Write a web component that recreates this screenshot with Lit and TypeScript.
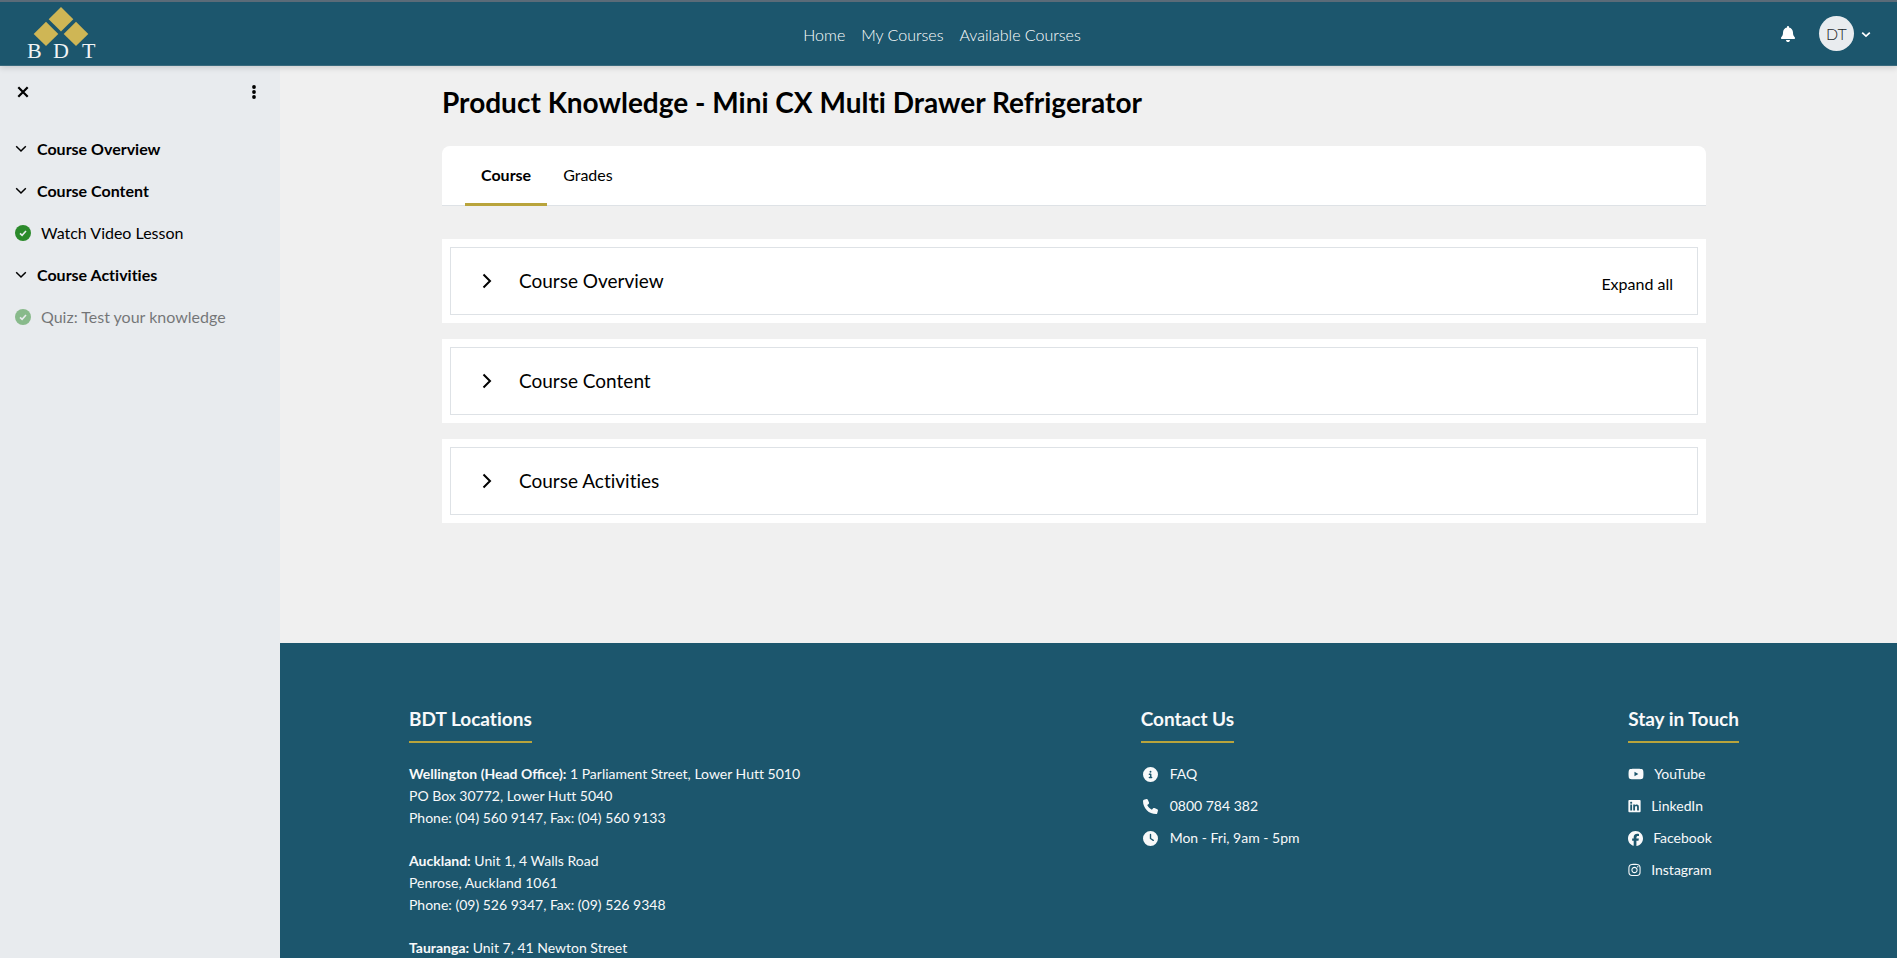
import { LitElement, html, css } from "lit";
import { customElement, property, state } from "lit/decorators.js";
import { classMap } from "lit/directives/class-map.js";

const icon = (name: string) => {
  switch (name) {
    case "bell":
      return html`<svg class="ic" width="14" height="16" viewBox="0 0 448 512" aria-hidden="true"><path fill="currentColor" d="M224 0c-17.700 0-32 14.300-32 32v19.200C119 66 64 130.600 64 208v18.800c0 47-17.300 92.400-48.500 127.600l-7.400 8.300c-8.400 9.400-10.400 22.900-5.300 34.400S19.400 416 32 416H416c12.600 0 24-7.400 29.200-18.900s3.100-25-5.300-34.400l-7.400-8.300C401.300 319.200 384 273.900 384 226.800V208c0-77.400-55-142-128-156.800V32c0-17.700-14.300-32-32-32zm45.300 493.300c12-12 18.700-28.300 18.700-45.300H160c0 17 6.700 33.300 18.700 45.300s28.300 18.700 45.300 18.700s33.300-6.700 45.300-18.700z"/></svg>`;
    case "info":
      return html`<svg class="ic" width="15" height="15" viewBox="0 0 512 512" aria-hidden="true"><path fill="currentColor" d="M256 512A256 256 0 1 0 256 0a256 256 0 1 0 0 512zM216 336h24V272H216c-13.300 0-24-10.700-24-24s10.700-24 24-24h48c13.300 0 24 10.700 24 24v88h8c13.300 0 24 10.700 24 24s-10.700 24-24 24H216c-13.300 0-24-10.700-24-24s10.700-24 24-24zm40-208a32 32 0 1 1 0 64 32 32 0 1 1 0-64z"/></svg>`;
    case "phone":
      return html`<svg class="ic" width="15" height="15" viewBox="0 0 512 512" aria-hidden="true"><path fill="currentColor" d="M164.900 24.600c-7.700-18.600-28-28.500-47.400-23.200l-88 24C12.100 30.200 0 46 0 64C0 311.400 200.600 512 448 512c18 0 33.800-12.100 38.600-29.500l24-88c5.300-19.400-4.600-39.700-23.200-47.400l-96-40c-16.300-6.800-35.200-2.100-46.300 11.600L304.700 368C234.300 334.700 177.300 277.700 144 207.300L193.300 167c13.700-11.200 18.400-30 11.600-46.300l-40-96z"/></svg>`;
    case "clock":
      return html`<svg class="ic" width="15" height="15" viewBox="0 0 512 512" aria-hidden="true"><path fill="currentColor" d="M256 0a256 256 0 1 1 0 512A256 256 0 1 1 256 0zM232 120V256c0 8 4 15.500 10.700 20l96 64c11 7.400 25.900 4.400 33.300-6.700s4.400-25.900-6.700-33.300L280 243.200V120c0-13.300-10.700-24-24-24s-24 10.700-24 24z"/></svg>`;
    case "youtube":
      return html`<svg class="ic" width="16" height="14" viewBox="0 0 576 512" aria-hidden="true"><path fill="currentColor" d="M549.700 124.100c-6.300-23.700-24.800-42.300-48.300-48.600C458.800 64 288 64 288 64S117.200 64 74.600 75.500c-23.500 6.300-42 24.900-48.300 48.600-11.400 42.900-11.400 132.300-11.400 132.300s0 89.400 11.400 132.300c6.300 23.700 24.800 41.500 48.300 47.800C117.200 448 288 448 288 448s170.800 0 213.400-11.500c23.500-6.300 42-24.200 48.300-47.800 11.400-42.900 11.400-132.300 11.400-132.300s0-89.400-11.400-132.300zm-317.500 213.500V175.200l142.700 81.200-142.700 81.200z"/></svg>`;
    case "linkedin":
      return html`<svg class="ic" width="13" height="14" viewBox="0 0 448 512" aria-hidden="true"><path fill="currentColor" d="M416 32H31.900C14.300 32 0 46.500 0 64.300v383.400C0 465.500 14.300 480 31.900 480H416c17.600 0 32-14.500 32-32.300V64.300c0-17.800-14.400-32.300-32-32.300zM135.400 416H69V202.200h66.500V416zm-33.200-243c-21.300 0-38.500-17.300-38.500-38.500S80.900 96 102.200 96c21.200 0 38.500 17.300 38.500 38.500 0 21.300-17.200 38.500-38.500 38.500zm282.100 243h-66.400V312c0-24.800-.5-56.700-34.500-56.700-34.600 0-39.900 27-39.900 54.900V416h-66.400V202.200h63.700v29.200h.9c8.900-16.800 30.600-34.500 62.900-34.500 67.200 0 79.700 44.300 79.700 101.900V416z"/></svg>`;
    case "facebook":
      return html`<svg class="ic" width="15" height="15" viewBox="0 0 512 512" aria-hidden="true"><path fill="currentColor" d="M512 256C512 114.600 397.400 0 256 0S0 114.600 0 256C0 376 82.700 476.800 194.200 504.500V334.200H141.400V256h52.800V222.300c0-87.100 39.400-127.500 125-127.500c16.200 0 44.200 3.200 55.700 6.400V172c-6-.6-16.500-1-29.600-1c-42 0-58.200 15.900-58.200 57.200V256h83.600l-14.400 78.200H287V510.100C413.800 494.800 512 386.900 512 256z"/></svg>`;
    case "instagram":
      return html`<svg class="ic" width="13" height="14" viewBox="0 0 448 512" aria-hidden="true"><path fill="currentColor" d="M224.100 141c-63.600 0-114.900 51.300-114.900 114.900s51.300 114.900 114.900 114.900S339 319.500 339 255.900 287.700 141 224.100 141zm0 189.600c-41.100 0-74.700-33.500-74.700-74.700s33.500-74.700 74.700-74.700 74.700 33.500 74.700 74.700-33.600 74.700-74.700 74.700zm146.400-194.300c0 14.900-12 26.800-26.800 26.800-14.900 0-26.800-12-26.800-26.800s12-26.800 26.800-26.800 26.800 12 26.800 26.800zm76.100 27.200c-1.700-35.900-9.900-67.700-36.200-93.900-26.200-26.200-58-34.400-93.900-36.200-37-2.100-147.900-2.100-184.900 0-35.800 1.700-67.600 9.900-93.900 36.100s-34.400 58-36.200 93.900c-2.100 37-2.100 147.900 0 184.900 1.700 35.900 9.900 67.700 36.200 93.900s58 34.400 93.900 36.200c37 2.100 147.900 2.100 184.900 0 35.900-1.700 67.700-9.900 93.900-36.200 26.200-26.200 34.400-58 36.200-93.900 2.100-37 2.100-147.800 0-184.800zM398.800 388c-7.800 19.600-22.900 34.700-42.600 42.600-29.500 11.700-99.500 9-132.100 9s-102.700 2.600-132.100-9c-19.600-7.800-34.700-22.900-42.600-42.600-11.700-29.500-9-99.500-9-132.100s-2.600-102.700 9-132.100c7.800-19.600 22.900-34.700 42.600-42.600 29.500-11.700 99.500-9 132.100-9s102.700-2.600 132.100 9c19.600 7.800 34.700 22.900 42.600 42.600 11.700 29.500 9 99.500 9 132.100s2.700 102.700-9 132.100z"/></svg>`;
    case "check":
      return html`<svg class="ic" width="16" height="16" viewBox="0 0 16 16" aria-hidden="true"><circle cx="8" cy="8" r="8" fill="#2b8a2b"/><path d="M5 8.300l2.100 2L11 6" fill="none" stroke="#e8ecef" stroke-width="1.600"/></svg>`;
    case "down":
      return html`<svg class="ic" width="12" height="12" viewBox="0 0 12 12" aria-hidden="true"><path d="M1.200 3.200L6 8l4.800-4.800" fill="none" stroke="currentColor" stroke-width="1.500"/></svg>`;
    case "caret":
      return html`<svg class="ic" width="10" height="10" viewBox="0 0 10 10" aria-hidden="true"><path d="M1.200 3.600L5 7.200l3.800-3.600" fill="none" stroke="currentColor" stroke-width="1.700"/></svg>`;
    case "right":
      return html`<svg class="ic" width="10" height="16" viewBox="0 0 10 16" aria-hidden="true"><path d="M1.500 1.500L8 8l-6.500 6.500" fill="none" stroke="currentColor" stroke-width="2"/></svg>`;
    case "close":
      return html`<svg class="ic" width="12" height="12" viewBox="0 0 12 12" aria-hidden="true"><path d="M1.300 1.300l9.400 9.400M10.700 1.300l-9.400 9.400" stroke="currentColor" stroke-width="2.200"/></svg>`;
    default:
      return html`<svg class="ic" width="4" height="14" viewBox="0 0 4 14" aria-hidden="true"><g fill="currentColor"><circle cx="2" cy="2" r="1.900"/><circle cx="2" cy="7" r="1.900"/><circle cx="2" cy="12" r="1.900"/></g></svg>`;
  }
};

const base = css`
  :host, * { box-sizing: border-box; }
  h1, h2, h3, p, ul, button { margin: 0; padding: 0; }
  a { color: inherit; text-decoration: none; }
  ul { list-style: none; }
  button { font: inherit; color: inherit; background: none; border: 0; cursor: pointer; }
  .ic { display: block; flex: none; }
`;

@customElement("site-header")
export class SiteHeader extends LitElement {
  static styles = [base, css`
    :host {
      display: grid;
      grid-template-columns: 1fr auto 1fr;
      align-items: center;
      height: 66px;
      padding: 0 26px 0 13px;
      background: #1c566d;
      border-top: 2px solid #5b6b78;
      border-bottom: 1px solid #396a7d;
      box-shadow: 0 2px 6px rgba(0, 0, 0, 0.14);
      color: #fff;
      position: relative;
      z-index: 1;
    }
    .logo { justify-self: start; margin-left: 13px; }
    .logo svg { display: block; }
    .nav { display: flex; gap: 16px; padding-top: 2px; font-weight: 300; }
    .tools { justify-self: end; display: flex; align-items: center; }
    .bell { padding: 5px; margin-right: 19px; }
    .user { display: flex; align-items: center; gap: 7px; }
    .avatar {
      display: grid; place-items: center;
      width: 35px; height: 35px; border-radius: 50%;
      background: #e9ecef; color: #212529; font-weight: 300;
    }
  `];
  render() {
    return html`
      <a class="logo" href="#" aria-label="BDT home">
        <svg width="72" height="56" viewBox="0 0 72 56">
          <g fill="#cfb655">
            <path d="M35 1l12.300 12.200L35 25.400 22.700 13.200z"/>
            <path d="M20 15.800l12.300 12.100L20 40 7.700 27.900z"/>
            <path d="M50 15.800l12.300 12.100L50 40 37.700 27.900z"/>
          </g>
          <g fill="#f1f4f5" font-family="Liberation Serif, serif" font-size="22">
            <text x="1" y="52">B</text><text x="27" y="52">D</text><text x="56" y="52">T</text>
          </g>
        </svg>
      </a>
      <nav class="nav">
        <a href="#">Home</a><a href="#">My Courses</a><a href="#">Available Courses</a>
      </nav>
      <div class="tools">
        <button class="bell" aria-label="Notifications">${icon("bell")}</button>
        <button class="user" aria-label="User menu"><span class="avatar">DT</span>${icon("caret")}</button>
      </div>`;
  }
}

@customElement("course-index")
export class CourseIndex extends LitElement {
  static styles = [base, css`
    :host { display: block; background: #e8ebee; padding: 12px 18px 0 15px; }
    .bar { display: flex; justify-content: space-between; margin-bottom: 22px; }
    .tool { display: grid; place-items: center; width: 16px; height: 28px; }
    .row { display: flex; align-items: center; height: 42px; width: 100%; gap: 10px; text-align: left; }
    .section { font-weight: 700; }
    .locked { opacity: 0.5; }
  `];
  render() {
    return html`
      <div class="bar">
        <button class="tool" aria-label="Close course index">${icon("close")}</button>
        <button class="tool" aria-label="Course index options">${icon("dots")}</button>
      </div>
      <nav>
        <button class="row section">${icon("down")}Course Overview</button>
        <button class="row section">${icon("down")}Course Content</button>
        <a class="row" href="#">${icon("check")}Watch Video Lesson</a>
        <button class="row section">${icon("down")}Course Activities</button>
        <a class="row locked" href="#">${icon("check")}Quiz: Test your knowledge</a>
      </nav>`;
  }
}

@customElement("course-section")
export class CourseSection extends LitElement {
  @property() heading = "";
  @property({ type: Boolean }) expander = false;
  static styles = [base, css`
    :host { display: block; background: #fff; padding: 8px; }
    .inner {
      display: flex; align-items: center; justify-content: space-between;
      height: 68px; padding: 0 24px 0 31px; border: 1px solid #dee2e6;
    }
    .toggle { display: flex; align-items: center; gap: 27px; }
    .name { font-size: 19px; font-weight: 400; line-height: 24px; }
    .all { padding-top: 6px; }
  `];
  render() {
    return html`<div class="inner">
      <button class="toggle" aria-expanded="false">${icon("right")}<h3 class="name">${this.heading}</h3></button>
      ${this.expander ? html`<button class="all">Expand all</button>` : ""}
    </div>`;
  }
}

@customElement("site-footer")
export class SiteFooter extends LitElement {
  static styles = [base, css`
    :host {
      display: flex; justify-content: space-between;
      background: #1c566d; color: #f8f9fa;
      padding: 64px 158px 64px 129px;
      font-size: 14px; line-height: 22px;
    }
    .title {
      width: fit-content; font-size: 19px; line-height: 24px; font-weight: 700;
      padding-bottom: 10px; border-bottom: 2px solid #b9a43c; margin-bottom: 20px;
    }
    .places { min-width: 403px; }
    .place { margin-bottom: 21px; }
    .place b { font-variant-ligatures: normal; }
    .list { display: flex; flex-direction: column; gap: 10px; }
    .item { display: flex; align-items: center; gap: 10px; }
    .contact .item { gap: 12px; padding-left: 2px; }
  `];
  render() {
    const item = (i: string, t: string) => html`<li><a class="item" href="#">${icon(i)}${t}</a></li>`;
    return html`
      <section class="places">
        <h2 class="title">BDT Locations</h2>
        <p class="place"><b>Wellington (Head Office):</b> 1 Parliament Street, Lower Hutt 5010<br>PO Box 30772, Lower Hutt 5040<br>Phone: (04) 560 9147, Fax: (04) 560 9133</p>
        <p class="place"><b>Auckland:</b> Unit 1, 4 Walls Road<br>Penrose, Auckland 1061<br>Phone: (09) 526 9347, Fax: (09) 526 9348</p>
        <p class="place"><b>Tauranga:</b> Unit 7, 41 Newton Street</p>
      </section>
      <section class="contact">
        <h2 class="title">Contact Us</h2>
        <ul class="list">${item("info", "FAQ")}${item("phone", "0800 784 382")}${item("clock", "Mon - Fri, 9am - 5pm")}</ul>
      </section>
      <section>
        <h2 class="title">Stay in Touch</h2>
        <ul class="list">${item("youtube", "YouTube")}${item("linkedin", "LinkedIn")}${item("facebook", "Facebook")}${item("instagram", "Instagram")}</ul>
      </section>`;
  }
}

@customElement("app-root")
export class AppRoot extends LitElement {
  @state() private tab = "Course";
  static styles = [base, css`
    :host {
      display: grid;
      grid-template: auto minmax(0, 1fr) / 280px minmax(0, 1fr);
      height: 100vh;
      font: 400 16px/24px Lato, sans-serif;
      font-variant-ligatures: none;
      color: #000;
      background: #f0f0f0;
    }
    site-header { grid-column: 1 / -1; }
    .page { overflow-y: auto; scrollbar-width: none; }
    .course { padding: 18px 191px 120px 162px; }
    .title { font-size: 28px; line-height: 36px; font-weight: 700; margin-bottom: 26px; }
    .tabs {
      display: flex; height: 60px; padding: 0 23px; margin-bottom: 33px;
      background: #fff; border-bottom: 1px solid #dee2e6; border-radius: 8px 8px 0 0;
    }
    .tab { height: 60px; padding: 0 16px; border-bottom: 3px solid transparent; }
    .active { font-weight: 700; border-bottom-color: #b9a43c; }
    .sections { display: grid; gap: 16px; }
  `];
  render() {
    return html`
      <site-header></site-header>
      <course-index></course-index>
      <div class="page">
        <main class="course">
          <h1 class="title">Product Knowledge - Mini CX Multi Drawer Refrigerator</h1>
          <div class="tabs" role="tablist">
            ${["Course", "Grades"].map((t) => html`<button role="tab" aria-selected=${this.tab === t}
              class=${classMap({ tab: true, active: this.tab === t })} @click=${() => (this.tab = t)}>${t}</button>`)}
          </div>
          <div class="sections">
            <course-section heading="Course Overview" expander></course-section>
            <course-section heading="Course Content"></course-section>
            <course-section heading="Course Activities"></course-section>
          </div>
        </main>
        <site-footer></site-footer>
      </div>`;
  }
}
